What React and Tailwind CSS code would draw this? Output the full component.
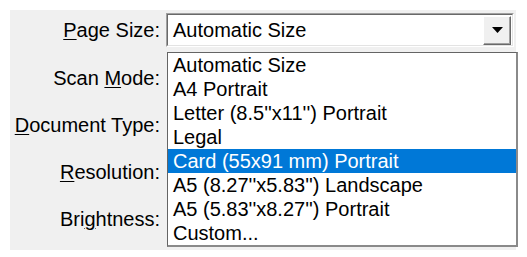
import React from 'react';

const font = { fontFamily: '"Liberation Sans", Arial, sans-serif' };

const options = [
    'Automatic Size',
    'A4 Portrait',
    'Letter (8.5\'\'x11\'\') Portrait',
    'Legal',
    'Card (55x91 mm) Portrait',
    'A5 (8.27\'\'x5.83\'\') Landscape',
    'A5 (5.83\'\'x8.27\'\') Portrait',
    'Custom...',
];

const Label = ({ before, hot, after }) => (
    <div className="w-[150px] text-right text-[20px] leading-none text-black whitespace-nowrap">
        {before}<span className="underline underline-offset-[2px] decoration-1">{hot}</span>{after}
    </div>
);

export default function App() {
    const selected = 4;

    return (
        <div className="w-[527px] h-[257px] bg-white pt-[10px] pl-[10px] overflow-hidden" style={font}>
            <div className="relative w-[506px] h-[240px] bg-[#f0f0f0] pt-[3px]">
                {/* --- Page Size row --- */}
                <div className="flex items-center h-[34px]">
                    <Label before="" hot="P" after="age Size:" />
                    <div className="ml-[6px] w-[348px] h-[34px] border border-t-[#a0a0a0] border-l-[#a0a0a0] border-b-white border-r-white">
                        <div className="h-full flex items-center bg-white border border-t-[#696969] border-l-[#696969] border-b-[#e3e3e3] border-r-[#e3e3e3]">
                            <span className="flex-1 pl-[5px] text-[20px] leading-none text-black">Automatic Size</span>
                            <div className="mr-[1px] w-[28px] h-[29px] bg-[#f0f0f0] flex items-center justify-center border border-t-white border-l-white border-b-[#696969] border-r-[#696969] shadow-[inset_-1px_-1px_0_#a0a0a0]">
                                <svg width="11" height="6" viewBox="0 0 11 6">
                                    <path d="M0 0h11L5.5 6z" fill="#000" />
                                </svg>
                            </div>
                        </div>
                    </div>
                </div>

                <div className="mt-[7px]">
                    <div className="flex items-center h-[47px]"><Label before="Scan " hot="M" after="ode:" /></div>
                    <div className="flex items-center h-[47px]"><Label before="" hot="D" after="ocument Type:" /></div>
                    <div className="flex items-center h-[47px]"><Label before="" hot="R" after="esolution:" /></div>
                    <div className="flex items-center h-[47px]"><Label before="Bri" hot="g" after="htness:" /></div>
                </div>

                {/* --- Open dropdown list --- */}
                <div className="absolute left-[157px] top-[42px] w-[351px] h-[195px] bg-white border border-[#646464] border-r-2 border-b-2 border-r-[#8a8a8a] border-b-[#8a8a8a]">
                    {options.map((opt, i) => (
                        <div
                            key={opt}
                            className={i === selected
                                ? 'h-[24px] flex items-center pl-[5px] bg-[#0078d7] text-white text-[20px] leading-none whitespace-nowrap'
                                : 'h-[24px] flex items-center pl-[5px] text-black text-[20px] leading-none whitespace-nowrap'}
                        >
                            {opt}
                        </div>
                    ))}
                </div>
            </div>
        </div>
    );
}
